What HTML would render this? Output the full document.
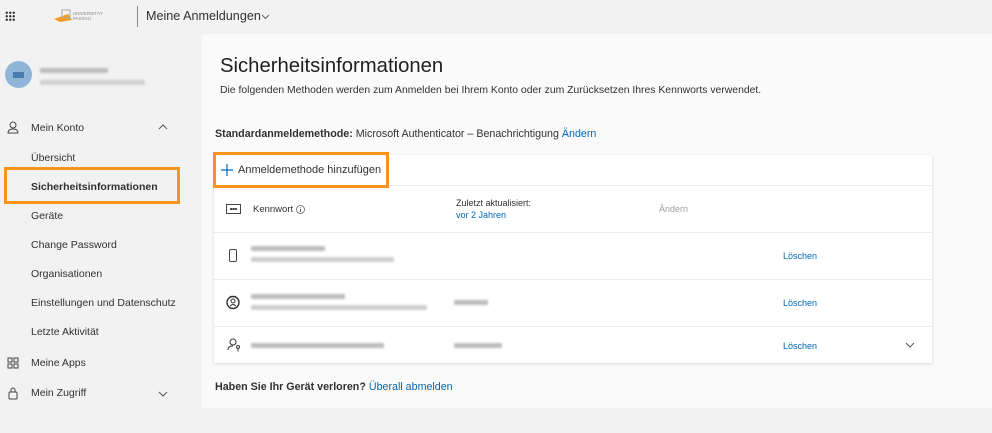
<!DOCTYPE html>
<html><head><meta charset="utf-8"><style>
*{margin:0;padding:0;box-sizing:border-box}
body{width:992px;height:433px;background:#f2f2f2;font-family:"Liberation Sans",sans-serif;color:#323130;position:relative;overflow:hidden;font-size:11px}
.a{position:absolute}
.blur{position:absolute;background:#bdbdbd;filter:blur(1px);border-radius:1px}
.nav{position:absolute;left:31px;font-size:10.5px;color:#323130}
.row{position:absolute;left:0;right:0;border-top:1px solid #edebe9}
.lnk{color:#0067b8}
</style></head><body>
<div class="a" style="left:5px;top:11px;width:10px;height:10px;background:radial-gradient(circle,#333 1px,transparent 1.3px) 0 0/3.5px 3.5px"></div>
<svg class="a" style="left:52px;top:6px" width="55" height="18"><path d="M2 13 L16 8 L20 14 L8 16Z" fill="#f39c1f"/><path d="M10 4h8v8h-8z" fill="none" stroke="#aaa"/><text x="21" y="9" font-size="4.5" fill="#888" font-family="Liberation Sans">UNIVERSITÄT</text><text x="21" y="14" font-size="4.5" fill="#888" font-family="Liberation Sans">PASSAU</text></svg>
<div class="a" style="left:137px;top:6px;width:1px;height:21px;background:#8a8886"></div>
<div class="a" style="left:146px;top:9px;font-size:12.6px;color:#323130">Meine Anmeldungen</div>
<svg class="a" style="left:261px;top:14px" width="9" height="6"><path d="M1 1l3.5 3.5L8 1" fill="none" stroke="#666"/></svg>
<div class="a" style="left:5px;top:61px;width:27px;height:27px;border-radius:50%;background:#8fb5d8"></div>
<div class="a" style="left:13px;top:72px;width:11px;height:6px;background:#4a7bb0"></div>
<div class="blur" style="left:40px;top:68px;width:68px;height:5px"></div>
<div class="blur" style="left:40px;top:80px;width:105px;height:5px;background:#d0d0d0"></div>

<svg class="a" style="left:7px;top:121px" width="12" height="13"><circle cx="6" cy="4" r="3" fill="none" stroke="#444"/><path d="M1 12 Q1 8 6 8 Q11 8 11 12Z" fill="none" stroke="#444"/></svg>
<div class="nav" style="top:122px">Mein Konto</div>
<svg class="a" style="left:158px;top:124px" width="10" height="6"><path d="M1 5l4-4 4 4" fill="none" stroke="#555"/></svg>
<div class="nav" style="top:152px">Übersicht</div>
<div class="nav" style="top:181px;font-weight:bold">Sicherheitsinformationen</div>
<div class="a" style="left:4px;top:167px;width:176px;height:37px;border:3px solid #f7951d"></div>
<div class="nav" style="top:210px">Geräte</div>
<div class="nav" style="top:239px">Change Password</div>
<div class="nav" style="top:268px">Organisationen</div>
<div class="nav" style="top:297px">Einstellungen und Datenschutz</div>
<div class="nav" style="top:326px">Letzte Aktivität</div>
<svg class="a" style="left:7px;top:357px" width="12" height="12"><path d="M1 1h4v4h-4zM1 7h4v4h-4zM7 7h4v4h-4zM7 1h4v4h-4z" fill="none" stroke="#444"/></svg>
<div class="nav" style="top:357px">Meine Apps</div>
<svg class="a" style="left:7px;top:387px" width="12" height="13"><rect x="2" y="5" width="8" height="7" rx="1" fill="none" stroke="#444"/><path d="M4 5V3a2 2 0 014 0v2" fill="none" stroke="#444"/></svg>
<div class="nav" style="top:387px">Mein Zugriff</div>
<svg class="a" style="left:158px;top:391px" width="10" height="6"><path d="M1 1l4 4 4-4" fill="none" stroke="#555"/></svg>

<div class="a" style="left:202px;top:34px;width:790px;height:374px;background:#fafafa"></div>
<div class="a" style="left:220px;top:55px;font-size:20.3px;color:#201f1e">Sicherheitsinformationen</div>
<div class="a" style="left:220px;top:85px;font-size:10.4px">Die folgenden Methoden werden zum Anmelden bei Ihrem Konto oder zum Zurücksetzen Ihres Kennworts verwendet.</div>
<div class="a" style="left:215px;top:128px;font-size:10.7px"><b>Standardanmeldemethode:</b> Microsoft Authenticator – Benachrichtigung <span class="lnk">Ändern</span></div>

<div class="a" style="left:214px;top:155px;width:718px;height:208px;background:#fff;box-shadow:0 1px 3px rgba(0,0,0,.15)">
 <svg class="a" style="left:7px;top:9px" width="12" height="12"><path d="M6 0v12M0 6h12" stroke="#0067b8" stroke-width="1.2"/></svg>
 <div class="a" style="left:24px;top:9px;font-size:11px">Anmeldemethode hinzufügen</div>
 <div class="row" style="top:30px"></div>
 <div class="a" style="left:12px;top:49px;width:15px;height:10px;border:1.3px solid #444"></div>
 <div class="a" style="left:16px;top:53px;width:7px;height:2px;background:radial-gradient(circle,#333 1px,transparent 1.1px) 0 0/2.4px 2px"></div>
 <div class="a" style="left:39px;top:49px;font-size:9.5px">Kennwort</div>
 <svg class="a" style="left:82px;top:50px" width="9" height="9"><circle cx="4.5" cy="4.5" r="4" fill="none" stroke="#666" stroke-width=".8"/><path d="M4.5 4v3M4.5 2.3v.8" stroke="#666"/></svg>
 <div class="a" style="left:242px;top:43px;font-size:9px">Zuletzt aktualisiert:</div>
 <div class="a" style="left:242px;top:55px;font-size:9px;color:#0067b8">vor 2 Jahren</div>
 <div class="a" style="left:445px;top:49px;font-size:9px;color:#a19f9d">Ändern</div>
 <div class="row" style="top:77px"></div>
 <div class="a" style="left:15px;top:94px;width:8px;height:13px;border:1.3px solid #444;border-radius:2px"></div>
 <div class="blur" style="left:37px;top:91px;width:74px;height:5px"></div>
 <div class="blur" style="left:37px;top:102px;width:143px;height:5px;background:#d0d0d0"></div>
 <div class="a" style="left:569px;top:96px;font-size:9px;color:#0067b8">Löschen</div>
 <div class="row" style="top:124px"></div>
 <svg class="a" style="left:12px;top:140px" width="14" height="15"><circle cx="7" cy="7.5" r="6" fill="none" stroke="#333" stroke-width="1.4"/><circle cx="7" cy="6" r="2" fill="none" stroke="#333"/><path d="M4 11q3-3 6 0" fill="none" stroke="#333"/><path d="M3 3l2-2M11 3l-2-2" stroke="#333"/></svg>
 <div class="blur" style="left:37px;top:139px;width:94px;height:5px"></div>
 <div class="blur" style="left:37px;top:150px;width:176px;height:5px;background:#d0d0d0"></div>
 <div class="blur" style="left:240px;top:145px;width:34px;height:5px"></div>
 <div class="a" style="left:569px;top:143px;font-size:9px;color:#0067b8">Löschen</div>
 <div class="row" style="top:171px"></div>
 <svg class="a" style="left:13px;top:183px" width="14" height="14"><circle cx="6" cy="4" r="3" fill="none" stroke="#333"/><path d="M1 12Q1 8 6 8" fill="none" stroke="#333"/><circle cx="11" cy="9" r="1.5" fill="none" stroke="#333"/><path d="M11 10.5v3" stroke="#333"/></svg>
 <div class="blur" style="left:37px;top:188px;width:133px;height:5px"></div>
 <div class="blur" style="left:240px;top:188px;width:48px;height:5px"></div>
 <div class="a" style="left:569px;top:186px;font-size:9px;color:#0067b8">Löschen</div>
 <svg class="a" style="left:691px;top:187px" width="10" height="6"><path d="M1 1l4 4 4-4" fill="none" stroke="#555"/></svg>
</div>
<div class="a" style="left:213px;top:152px;width:176px;height:36px;border:3px solid #f7951d"></div>
<div class="a" style="left:215px;top:381px;font-size:10.7px"><b>Haben Sie Ihr Gerät verloren?</b> <span class="lnk">Überall abmelden</span></div>
</body></html>
